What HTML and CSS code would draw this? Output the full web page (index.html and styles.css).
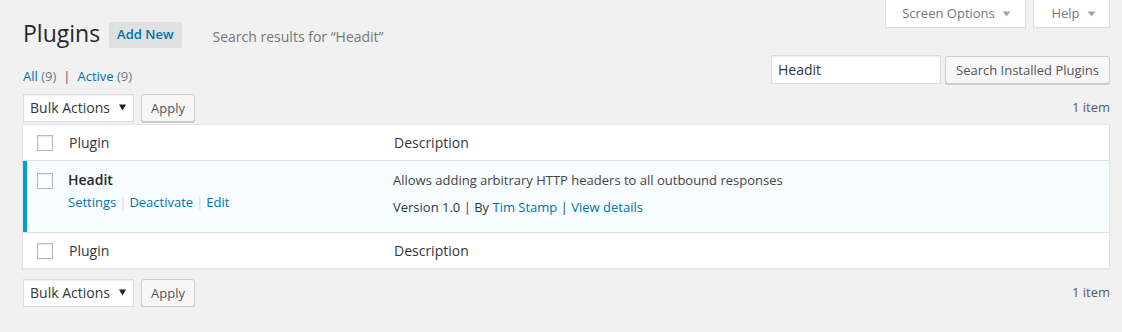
FILE: index.html
```html
<!DOCTYPE html>
<html lang="en">
<head>
<meta charset="utf-8">
<title>Plugins</title>
<link rel="stylesheet" href="styles.css">
</head>
<body>
<div class="wrap">
  <div class="top">
    <h1 class="title">Plugins <a class="title-action" href="#">Add New</a><span class="subtitle">Search results for “Headit”</span></h1>
    <div class="meta-links">
      <button class="tab tab-screen">Screen Options <svg class="tab-arrow" width="9" height="6" viewBox="0 0 9 6"><path d="M0.5 0.5h8L4.5 5.5z" fill="#a0a5aa"/></svg></button>
      <button class="tab tab-help">Help <svg class="tab-arrow" width="9" height="6" viewBox="0 0 9 6"><path d="M0.5 0.5h8L4.5 5.5z" fill="#a0a5aa"/></svg></button>
    </div>
  </div>

  <div class="filter-row">
    <ul class="subsubsub">
      <li><a href="#" class="current">All <span class="count">(9)</span></a></li>
      <li class="sep">|</li>
      <li><a href="#">Active <span class="count">(9)</span></a></li>
    </ul>
    <div class="search-box">
      <input class="search-input" type="search" value="Headit">
      <button class="button">Search Installed Plugins</button>
    </div>
  </div>

  <div class="tablenav tablenav-top">
    <div class="actions">
      <span class="select-wrap">
        <select class="select"><option>Bulk Actions</option></select>
        <svg class="select-arrow" width="7" height="7" viewBox="0 0 7 7"><path d="M0 0.5h7L3.5 6.5z" fill="#222"/></svg>
      </span>
      <button class="button button-apply">Apply</button>
    </div>
    <span class="displaying-num">1 item</span>
  </div>

  <table class="plugins">
    <thead>
      <tr>
        <td class="check-col"><span class="checkbox"></span></td>
        <th class="col-name">Plugin</th>
        <th class="col-desc">Description</th>
      </tr>
    </thead>
    <tbody>
      <tr class="active">
        <td class="check-col check-active"><span class="checkbox"></span></td>
        <td class="plugin-title">
          <strong>Headit</strong>
          <div class="row-actions">
            <a href="#">Settings</a><span class="ra-sep">|</span><a href="#">Deactivate</a><span class="ra-sep">|</span><a href="#">Edit</a>
          </div>
        </td>
        <td class="desc">
          <p class="desc-text">Allows adding arbitrary HTTP headers to all outbound responses</p>
          <p class="version">Version 1.0 | By <a href="#">Tim Stamp</a> | <a href="#">View details</a></p>
        </td>
      </tr>
    </tbody>
    <tfoot>
      <tr>
        <td class="check-col"><span class="checkbox"></span></td>
        <th class="col-name">Plugin</th>
        <th class="col-desc">Description</th>
      </tr>
    </tfoot>
  </table>

  <div class="tablenav tablenav-bottom">
    <div class="actions">
      <span class="select-wrap">
        <select class="select"><option>Bulk Actions</option></select>
        <svg class="select-arrow" width="7" height="7" viewBox="0 0 7 7"><path d="M0 0.5h7L3.5 6.5z" fill="#222"/></svg>
      </span>
      <button class="button button-apply">Apply</button>
    </div>
    <span class="displaying-num">1 item</span>
  </div>
</div>
</body>
</html>
```

FILE: styles.css
```css
* { box-sizing: border-box; }

html, body {
  margin: 0;
  background: #f1f1f1;
}

body {
  font-family: "Open Sans", "Liberation Sans", sans-serif;
  font-size: 13px;
  line-height: 1.4;
  color: #444;
}

a { color: #0073aa; text-decoration: none; }

.wrap {
  padding: 0 12px 0 22px;
}

.top {
  display: flex;
  justify-content: space-between;
  align-items: flex-start;
}

.title {
  margin: 19px 0 0 1px;
  display: flex;
  align-items: center;
  font-size: 23px;
  font-weight: 400;
  line-height: 29px;
  color: #23282d;
}

.title-action {
  margin-left: 9px;
  height: 26px;
  padding: 0 8px;
  display: inline-flex;
  align-items: center;
  font-size: 13px;
  font-weight: 600;
  background: #e0e0e0;
  border-radius: 2px;
  color: #0073aa;
  position: relative;
  top: 1px;
}

.subtitle {
  padding-left: 31px;
  font-size: 14px;
  color: #72777c;
  position: relative;
  top: 3px;
}

.meta-links {
  display: flex;
  gap: 7px;
}

.tab {
  font-family: inherit;
  font-size: 13px;
  color: #72777c;
  background: #fff;
  border: 1px solid #ddd;
  border-top: none;
  height: 28px;
  padding: 0 0 1px;
  display: flex;
  align-items: center;
  justify-content: center;
  gap: 7px;
  box-shadow: 0 1px 1px -1px rgba(0,0,0,.1);
}

.tab-screen { width: 141px; padding-left: 2px; }
.tab-help { width: 77px; padding-left: 4px; }

.tab-arrow { display: block; margin-top: 1px; }

.filter-row {
  display: flex;
  justify-content: space-between;
  align-items: flex-start;
  margin-top: 7px;
}

.subsubsub {
  list-style: none;
  margin: 8px 0 0 1px;
  padding: 0;
  display: flex;
  gap: 7px;
  line-height: 26px;
  color: #666;
}

.subsubsub .count { color: #72777c; }
.subsubsub .sep { color: #555; }

.search-box {
  display: flex;
  align-items: flex-start;
  gap: 4px;
}

.search-input {
  width: 170px;
  height: 29px;
  border: 1px solid #ddd;
  box-shadow: inset 0 1px 2px rgba(0,0,0,.07);
  background: #fff;
  font-family: inherit;
  font-size: 14px;
  color: #32373c;
  padding: 0 6px;
  margin: 0;
  outline: none;
}

.button {
  font-family: inherit;
  font-size: 13px;
  color: #555;
  background: #f7f7f7;
  border: 1px solid #ccc;
  border-radius: 3px;
  box-shadow: 0 1px 0 #ccc;
  height: 28px;
  padding: 0 10px 1px;
  margin-top: 1px;
  line-height: 26px;
  cursor: pointer;
}

.tablenav {
  display: flex;
  justify-content: space-between;
  align-items: center;
  height: 29px;
}

.tablenav-top { margin-top: 4px; margin-bottom: 2px; }
.tablenav-bottom { margin-top: 9px; }

.actions {
  display: flex;
  align-items: flex-start;
  gap: 7px;
  padding-left: 1px;
}

.select-wrap {
  position: relative;
  display: inline-block;
}

.select {
  -webkit-appearance: none;
  appearance: none;
  width: 111px;
  height: 28px;
  border: 1px solid #ddd;
  box-shadow: inset 0 1px 2px rgba(0,0,0,.07);
  background: #fff;
  font-family: inherit;
  font-size: 14px;
  color: #32373c;
  padding: 0 6px;
  margin: 0;
  border-radius: 0;
  outline: none;
}

.select-arrow {
  position: absolute;
  right: 8px;
  top: 10px;
}

.button-apply {
  margin-top: 0;
  padding: 0 9px 1px;
}

.displaying-num {
  color: #555d66;
  font-size: 13px;
}

.plugins {
  width: 100%;
  border: 1px solid #e5e5e5;
  box-shadow: 0 1px 1px rgba(0,0,0,.04);
  border-spacing: 0;
  background: #fff;
}

.plugins th, .plugins td {
  text-align: left;
  vertical-align: top;
}

.plugins thead th, .plugins tfoot th {
  font-size: 14px;
  font-weight: 400;
  color: #32373c;
  padding: 0 10px;
  height: 36px;
  vertical-align: middle;
}

.plugins thead td, .plugins thead th { border-bottom: 1px solid #e1e1e1; }
.plugins tfoot td, .plugins tfoot th { border-top: 1px solid #e1e1e1; }

.plugins .check-col {
  width: 36px;
  padding: 0 0 0 14px;
  vertical-align: middle;
}

.plugins thead .check-col { padding-top: 1px; }
.plugins tfoot .check-col { padding-top: 0; }

.col-name { width: 325px; }

.checkbox {
  display: block;
  width: 16px;
  height: 16px;
  border: 1px solid #b4b9be;
  background: #fff;
  box-shadow: inset 0 1px 2px rgba(0,0,0,.1);
}

tr.active td { background: #f7fcfe; }

.plugins .check-active {
  vertical-align: top;
  padding-top: 12px;
  box-shadow: inset 4px 0 0 #00a0d2;
}

.plugin-title {
  padding: 9px 10px 0;
  height: 71px;
}

.plugin-title strong {
  display: block;
  font-size: 14px;
  font-weight: 600;
  color: #23282d;
  line-height: 20px;
  margin-left: -1px;
}

.row-actions {
  margin-top: 2px;
  margin-left: -1px;
  font-size: 13px;
  line-height: 20px;
}

.ra-sep {
  color: #ddd;
  margin: 0 3px;
}

.ra-sep + a { margin-left: 0; }

.desc {
  padding: 9px 10px 0;
}

.desc p {
  margin: 0 0 0 -1px;
  font-size: 13px;
  line-height: 20px;
}

.desc .desc-text { color: #444; }

.desc .version {
  margin-top: 7px;
  color: #32373c;
}
```
